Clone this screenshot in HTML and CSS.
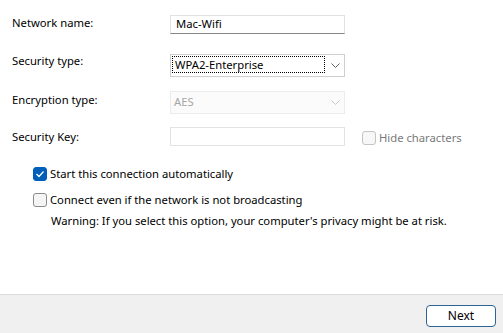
FILE: index.html
```html
<!DOCTYPE html>
<html>
<head>
<meta charset="utf-8">
<link rel="stylesheet" href="styles.css">
</head>
<body>
<div class="dialog">
  <div class="content">
    <div class="row row1">
      <div class="label">Network name:</div>
      <div class="field textbox active"><span class="val">Mac-Wifi</span></div>
    </div>
    <div class="row row2">
      <div class="label lab2">Security type:</div>
      <div class="field select">
        <span class="focus">WPA2-Enterprise</span>
        <svg class="chev" width="9" height="5" viewBox="0 0 9 5"><path d="M0.5 0.5 L4.5 4.5 L8.5 0.5" fill="none" stroke="#606060" stroke-width="1"/></svg>
      </div>
    </div>
    <div class="row row3">
      <div class="label lab3">Encryption type:</div>
      <div class="field select disabled">
        <span class="plain">AES</span>
        <svg class="chev" width="9" height="5" viewBox="0 0 9 5"><path d="M0.5 0.5 L4.5 4.5 L8.5 0.5" fill="none" stroke="#c8c8c8" stroke-width="1"/></svg>
      </div>
    </div>
    <div class="row row4">
      <div class="label lab4">Security Key:</div>
      <div class="field textbox inactive"></div>
      <div class="hide">
        <span class="cb cb-disabled"></span>
        <span class="hide-text">Hide characters</span>
      </div>
    </div>
    <div class="check check1">
      <span class="cb cb-checked"><svg width="10" height="8" viewBox="0 0 10 8"><path d="M1.5 4 L4 6.5 L8.5 1.5" fill="none" stroke="#fff" stroke-width="1.3"/></svg></span>
      <span class="check-text">Start this connection automatically</span>
    </div>
    <div class="check check2">
      <span class="cb cb-off"></span>
      <span class="check-text">Connect even if the network is not broadcasting</span>
    </div>
    <div class="warning">Warning: If you select this option, your computer's privacy might be at risk.</div>
  </div>
  <div class="footer">
    <div class="btn">Next</div>
  </div>
</div>
</body>
</html>
```
FILE: styles.css
```css
html, body {
  margin: 0;
  padding: 0;
  background: #ffffff;
}
body {
  font-family: "Segoe UI", "Noto Sans", "Open Sans", sans-serif;
  font-size: 11.25px;
  line-height: 16px;
  color: #000;
}
.dialog {
  width: 503px;
  height: 333px;
  display: flex;
  flex-direction: column;
}
.content {
  flex: 1;
  padding: 15px 0 0 12px;
  box-sizing: border-box;
}
.row {
  display: flex;
  align-items: flex-start;
}
.label {
  width: 158px;
  flex: none;
}
.row1 { margin-top: 0; }
.row2 { margin-top: 20px; }
.row3 { margin-top: 14px; }
.row4 { margin-top: 13px; }
.lab2 { margin-top: -1px; }
.lab3 { margin-top: 1px; }
.lab4 { margin-top: 2px; }
.field {
  width: 175px;
  box-sizing: border-box;
  flex: none;
  border: 1px solid #e3e3e3;
  background: #fff;
  position: relative;
}
.textbox {
  height: 19px;
}
.textbox.active {
  border-color: #e1e1e1;
  border-bottom-color: #868686;
}
.textbox .val {
  display: block;
  padding-left: 5px;
  line-height: 16px;
}
.select {
  height: 23px;
  border-color: #cfcfcf;
  display: flex;
  align-items: flex-start;
}
.select .focus {
  margin: 1px 0 0 1px;
  width: 153px;
  height: 17px;
  box-sizing: border-box;
  border: 1px dotted #000;
  padding: 0 0 0 2px;
  line-height: 16px;
}
.select .plain {
  margin: 2px 0 0 3px;
  color: #a6a6a6;
  width: 151px;
}
.select.disabled {
  border-color: #ececec;
  background: #fbfbfb;
}
.chev {
  margin: 8px 0 0 6px;
}
.hide {
  display: flex;
  align-items: flex-start;
  margin-left: 17px;
  margin-top: 3px;
  color: #7a7a7a;
}
.cb {
  width: 14px;
  height: 14px;
  box-sizing: border-box;
  border-radius: 3px;
  flex: none;
  display: flex;
  align-items: center;
  justify-content: center;
}
.cb-disabled {
  border: 1px solid #c4c4c4;
  background: #f7f7f7;
  margin-top: 1px;
}
.hide-text {
  margin-left: 3px;
}
.check {
  display: flex;
  align-items: flex-start;
  margin-left: 21px;
}
.check1 { margin-top: 20px; }
.check2 { margin-top: 10px; }
.cb-checked {
  background: #005fb8;
  border: 1px solid #005fb8;
  margin-top: 1px;
}
.cb-off {
  background: #f5f5f5;
  border: 1px solid #8a8a8a;
  margin-top: 1px;
}
.check-text {
  margin-left: 3px;
}
.warning {
  margin: 5px 0 0 39px;
}
.footer {
  height: 39px;
  box-sizing: border-box;
  border-top: 1px solid #dcdcdc;
  background: #f0f0f0;
  display: flex;
  justify-content: flex-end;
  align-items: flex-start;
  padding: 10px 7px 0 0;
}
.btn {
  width: 70px;
  height: 22px;
  box-sizing: border-box;
  border: 1px solid #2a6496;
  border-radius: 4px;
  background: #fff;
  text-align: center;
  line-height: 19px;
  font-size: 12px;
}
```
